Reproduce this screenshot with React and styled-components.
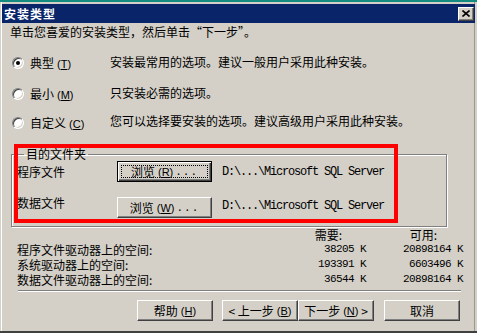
import React from "react";
import styled, { createGlobalStyle } from "styled-components";

const GlobalStyle = createGlobalStyle`
  html, body {
    margin: 0;
    padding: 0;
    background: #d4d0c8;
  }
  body {
    font-family: "Noto Sans CJK SC", "Liberation Sans", sans-serif;
    font-size: 12px;
    color: #000;
  }
`;

const Window = styled.div`
  position: relative;
  width: 477px;
  height: 333px;
  box-sizing: border-box;
  background: #d4d0c8;
  border-top: 2px solid #148b80;
  border-bottom: 2px solid #404040;
  padding: 2px 2px 0 2px;
  box-shadow: inset 1px 0 #d4d0c8, inset 2px 0 #fff, inset -2px 0 #d4d0c8,
    inset -3px 0 #9c9890;
  display: flex;
  flex-direction: column;
  overflow: hidden;
`;

const TitleBar = styled.div`
  height: 19px;
  background: #0a246a;
  display: flex;
  align-items: center;
  justify-content: space-between;
  padding: 0 1px 0 2px;
`;

const TitleText = styled.span`
  color: #fff;
  font-weight: bold;
  font-size: 12px;
  letter-spacing: 1px;
  line-height: 16px;
`;

const CloseButton = styled.div`
  width: 16px;
  height: 14px;
  box-sizing: border-box;
  background: #d4d0c8;
  border: 1px solid;
  border-color: #fff #404040 #404040 #fff;
  box-shadow: inset -1px -1px #808080;
  display: flex;
  align-items: center;
  justify-content: center;
`;

const Body = styled.div`
  padding-left: 8px;
  display: flex;
  flex-direction: column;
`;

const Instruction = styled.div`
  margin-top: 1px;
  line-height: 16px;
  height: 16px;
`;

const RadioRow = styled.div`
  margin-top: ${(p) => p.$top}px;
  padding-left: 2px;
  display: grid;
  grid-template-columns: 98px 1fr;
  height: 16px;
  align-items: center;
  line-height: 16px;
`;

const RadioLabel = styled.label`
  display: flex;
  align-items: center;
  gap: 6px;
  white-space: nowrap;
`;

const RadioDot = styled.span`
  width: 12px;
  height: 12px;
  box-sizing: border-box;
  border-radius: 50%;
  border: 1px solid;
  border-color: #808080 #fff #fff #808080;
  background: #fff;
  box-shadow: inset 1px 1px #404040, inset -1px -1px #d4d0c8;
  display: flex;
  align-items: center;
  justify-content: center;
  &::after {
    content: "";
    width: 4px;
    height: 4px;
    border-radius: 50%;
    background: ${(p) => (p.$checked ? "#000" : "transparent")};
  }
`;

const Key = styled.span`
  font-family: "Liberation Sans", sans-serif;
  font-size: 11px;
  margin-left: 3px;
`;

const Description = styled.span`
  margin-bottom: ${(p) => p.$lift * 2}px;
  white-space: nowrap;
`;

const Group = styled.fieldset`
  margin: 17px 0 0 1px;
  width: 436px;
  box-sizing: border-box;
  padding: 0 0 8px 5px;
  border: 1px solid #808080;
  box-shadow: inset 1px 1px #fff, 1px 1px #fff;
  min-inline-size: 0;
`;

const Legend = styled.legend`
  margin-left: 7px;
  padding: 0 2px;
  line-height: 16px;
`;

const GroupRow = styled.div`
  margin-top: ${(p) => p.$top}px;
  display: flex;
  align-items: center;
  height: 21px;
`;

const FieldLabel = styled.span`
  width: 100px;
  line-height: 16px;
  margin-bottom: ${(p) => p.$lift * 2}px;
`;

const PathText = styled.span`
  margin-left: 10px;
  font-family: "Liberation Mono", monospace;
  font-size: 12px;
  letter-spacing: -1.2px;
  white-space: nowrap;
  margin-top: ${(p) => p.$drop * 2}px;
`;

const Button = styled.button`
  width: ${(p) => p.$w}px;
  height: 21px;
  margin-left: ${(p) => p.$gap || 0}px;
  box-sizing: border-box;
  background: #d4d0c8;
  font-family: "Noto Sans CJK SC", "Liberation Sans", sans-serif;
  font-size: 12px;
  color: #000;
  line-height: 14px;
  padding: 0;
  display: flex;
  align-items: center;
  justify-content: center;
  white-space: nowrap;
  border: 1px solid;
  border-color: ${(p) =>
    p.$default ? "#000" : "#fff #404040 #404040 #fff"};
  box-shadow: ${(p) =>
    p.$default
      ? "inset 1px 1px #fff, inset -1px -1px #404040, inset -2px -2px #808080"
      : "inset -1px -1px #808080"};
`;

const FocusRing = styled.span`
  flex: 1;
  align-self: stretch;
  margin: 3px;
  border: 1px dotted #000;
  display: flex;
  align-items: center;
  justify-content: center;
`;

const Dots = styled.span`
  font-family: "Liberation Mono", monospace;
  font-size: 11px;
  letter-spacing: 1px;
  margin-left: 2px;
`;

const SpaceGrid = styled.div`
  margin: 0 0 0 7px;
  width: 446px;
  display: grid;
  grid-template-columns: 1fr 70px 97px;
  line-height: 15px;
`;

const HeadCell = styled.span`
  text-align: right;
  padding-right: ${(p) => p.$pad}px;
`;

const NumCell = styled.span`
  text-align: right;
  font-family: "Liberation Mono", monospace;
  font-size: 11px;
  letter-spacing: -0.6px;
  white-space: pre;
`;

const Separator = styled.div`
  margin: 3px 0 0 8px;
  width: 443px;
  border-top: 1px solid #808080;
  border-bottom: 1px solid #fff;
`;

const ButtonRow = styled.div`
  margin-top: 8px;
  padding-left: 127px;
  display: flex;
`;

const RedFrame = styled.div`
  position: absolute;
  left: 14px;
  top: 142px;
  width: 384px;
  height: 79px;
  box-sizing: border-box;
  border: 4px solid #ff0000;
  pointer-events: none;
`;

const Mn = ({ k }) => (
  <Key>
    (<u>{k}</u>)
  </Key>
);

const radios = [
  { label: "典型", k: "T", desc: "安装最常用的选项。建议一般用户采用此种安装。", checked: true, top: 14, lift: 1 },
  { label: "最小", k: "M", desc: "只安装必需的选项。", top: 15, lift: 1 },
  { label: "自定义", k: "C", desc: "您可以选择要安装的选项。建议高级用户采用此种安装。", top: 12, lift: 2 },
];

const spaces = [
  { label: "程序文件驱动器上的空间:", need: "38205 K", avail: "20898164 K" },
  { label: "系统驱动器上的空间:", need: "193391 K", avail: "6603496 K" },
  { label: "数据文件驱动器上的空间:", need: "36544 K", avail: "20898164 K" },
];

export default function App() {
  return (
    <>
      <GlobalStyle />
      <Window>
        <TitleBar>
          <TitleText>安装类型</TitleText>
          <CloseButton>
            <svg width="8" height="7" viewBox="0 0 8 7">
              <path d="M0.5 0.5 L7.5 6.5 M7.5 0.5 L0.5 6.5" stroke="#000" strokeWidth="1.6" />
            </svg>
          </CloseButton>
        </TitleBar>
        <Body>
          <Instruction>单击您喜爱的安装类型，然后单击“下一步”。</Instruction>
          {radios.map((r) => (
            <RadioRow key={r.k} $top={r.top}>
              <RadioLabel>
                <RadioDot $checked={r.checked} />
                <span>
                  {r.label}
                  <Mn k={r.k} />
                </span>
              </RadioLabel>
              <Description $lift={r.lift}>{r.desc}</Description>
            </RadioRow>
          ))}
          <Group>
            <Legend>目的文件夹</Legend>
            <GroupRow $top={-1}>
              <FieldLabel $lift={0}>程序文件</FieldLabel>
              <Button $w={95} $default>
                <FocusRing>
                  浏览<Mn k="R" />
                  <Dots>...</Dots>
                </FocusRing>
              </Button>
              <PathText $drop={0}>D:\...\Microsoft SQL Server</PathText>
            </GroupRow>
            <GroupRow $top={15}>
              <FieldLabel $lift={5}>数据文件</FieldLabel>
              <Button $w={95}>
                浏览<Mn k="W" />
                <Dots>...</Dots>
              </Button>
              <PathText $drop={-2}>D:\...\Microsoft SQL Server</PathText>
            </GroupRow>
          </Group>
          <SpaceGrid>
            <span />
            <HeadCell $pad={24}>需要:</HeadCell>
            <HeadCell $pad={26}>可用:</HeadCell>
            {spaces.map((s) => (
              <React.Fragment key={s.label}>
                <span>{s.label}</span>
                <NumCell>{s.need}</NumCell>
                <NumCell>{s.avail}</NumCell>
              </React.Fragment>
            ))}
          </SpaceGrid>
          <Separator />
          <ButtonRow>
            <Button $w={76}>
              帮助<Mn k="H" />
            </Button>
            <Button $w={76} $gap={9}>
              &lt; 上一步<Mn k="B" />
            </Button>
            <Button $w={76}>
              下一步<Mn k="N" />&nbsp;&gt;
            </Button>
            <Button $w={76} $gap={10}>
              取消
            </Button>
          </ButtonRow>
        </Body>
        <RedFrame />
      </Window>
    </>
  );
}
